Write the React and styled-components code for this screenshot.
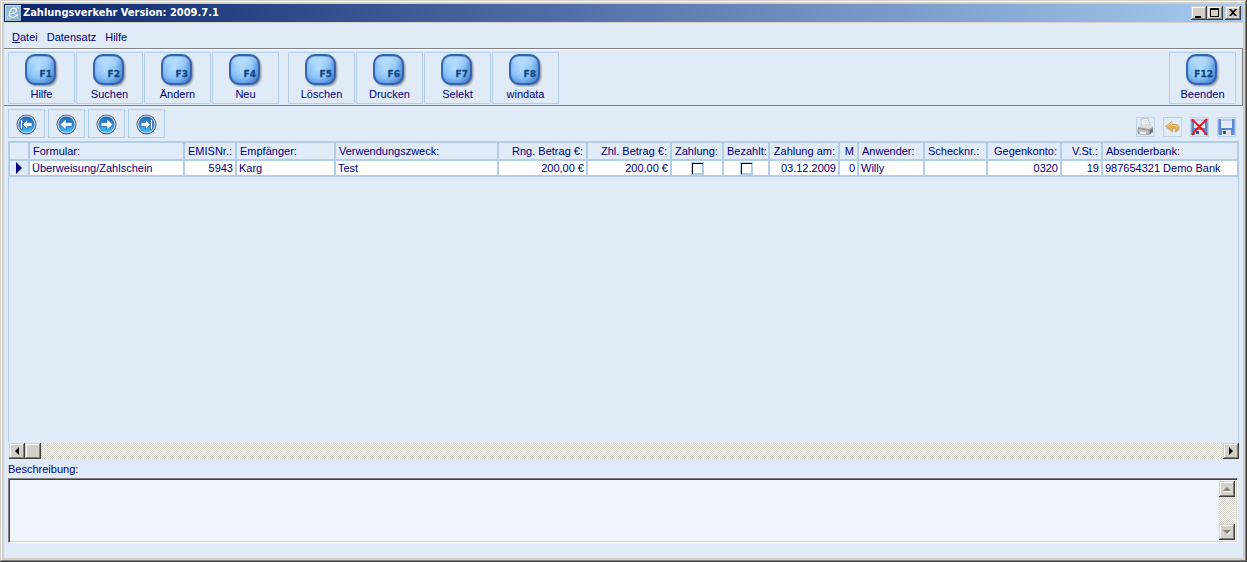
import React from "react";
import styled, { createGlobalStyle, css } from "styled-components";

const theme = {
  face: "#d4d0c8",
  surface: "#e1ebf7",
  field: "#eff4fd",
  line: "#b0cee8",
  text: "#000080",
};

const GlobalStyle = createGlobalStyle`
  * {
    box-sizing: border-box;
  }
  body {
    margin: 0;
    background: ${theme.face};
    color: ${theme.text};
    font-family: "Liberation Sans", Arial, sans-serif;
    font-size: 11px;
    line-height: 14px;
  }
  button, input, textarea {
    margin: 0;
    padding: 0;
    border: 0;
    border-radius: 0;
    background: none;
    color: inherit;
    font: inherit;
  }
  svg {
    display: block;
  }
`;

const raised = css`
  background: ${theme.face};
  box-shadow: inset -1px -1px 0 #404040, inset 1px 1px 0 #d4d0c8,
    inset -2px -2px 0 #808080, inset 2px 2px 0 #ffffff;
`;

const dither = css`
  background: conic-gradient(
      #ffffff 25%,
      ${theme.face} 0 50%,
      #ffffff 0 75%,
      ${theme.face} 0
    )
    0 0 / 2px 2px;
`;

const Window = styled.div`
  display: flex;
  flex-direction: column;
  min-height: 100vh;
  padding: 4px;
  background: ${theme.face};
  box-shadow: inset -1px -1px 0 #404040, inset 1px 1px 0 #d4d0c8,
    inset -2px -2px 0 #808080, inset 2px 2px 0 #ffffff;
`;

const TitleBar = styled.header`
  display: flex;
  align-items: center;
  height: 18px;
  padding: 0 2px 0 1px;
  margin-bottom: 1px;
  background: linear-gradient(to right, #0a246a, #a6caf0);
`;

const Title = styled.h1`
  flex: 1;
  margin: 0 0 0 2px;
  color: #ffffff;
  font-family: "DejaVu Sans Condensed", "DejaVu Sans", sans-serif;
  font-size: 11px;
  font-weight: bold;
`;

const WindowButton = styled.button`
  width: 16px;
  height: 14px;
  margin-left: ${(props) => (props.$gap ? "2px" : "0")};
  ${raised}
`;

const Client = styled.main`
  display: flex;
  flex: 1;
  flex-direction: column;
  background: ${theme.surface};
`;

const MenuBar = styled.nav`
  display: flex;
  align-items: center;
  gap: 9px;
  height: 25px;
  padding: 2px 8px 0;
`;

const ToolBar = styled.div`
  display: flex;
  height: 58px;
  padding: 3px 6px 0 4px;
  border: 1px solid #808080;
  border-left: 0;
  box-shadow: inset 0 1px 0 #ffffff;
`;

const ToolGroup = styled.div`
  display: flex;
  gap: 1px;
  margin-right: 9px;

  &:last-child {
    margin: 0 0 0 auto;
  }
`;

const ToolButton = styled.button`
  display: flex;
  flex-direction: column;
  align-items: center;
  width: 67px;
  height: 52px;
  padding-top: 1px;
  border: 1px solid ${theme.line};
  border-radius: 1px;
`;

const NavRow = styled.div`
  display: flex;
  align-items: flex-end;
  padding: 3px 7px 3px 4px;
`;

const NavGroup = styled.div`
  display: flex;
  flex: 1;
  gap: 3px;
`;

const NavButton = styled.button`
  display: grid;
  place-items: center;
  width: 37px;
  height: 29px;
  padding-top: 2px;
  border: 1px solid ${theme.line};
`;

const ActionGroup = styled.div`
  display: flex;
  gap: 8px;
  padding-bottom: 1px;
`;

const ActionButton = styled.button`
  display: grid;
  place-items: center;
  width: 19px;
  height: 20px;
  border: 1px solid #b9d3ea;
`;

const GridPanel = styled.section`
  display: flex;
  flex: 1;
  flex-direction: column;
  margin: 0 4px;
`;

const GridBody = styled.div`
  flex: 1;
  min-height: 100px;
  border: solid ${theme.line};
  border-width: 0 1px;
`;

const Table = styled.table`
  width: 100%;
  table-layout: fixed;
  border-collapse: separate;
  border-spacing: 2px;
  background: ${theme.line};
`;

const HeadCell = styled.th`
  height: 16px;
  padding: 0 3px;
  overflow: hidden;
  background: ${theme.surface};
  font-weight: normal;
  text-align: ${(props) => props.$align || "left"};
  white-space: nowrap;
`;

const Cell = styled.td`
  height: 14px;
  padding: 0 2px;
  overflow: hidden;
  background: ${(props) => (props.$marker ? theme.surface : "#ffffff")};
  text-align: ${(props) => props.$align || "left"};
  white-space: nowrap;
`;

const CheckBox = styled.input`
  display: block;
  width: 13px;
  height: 13px;
  margin: 0 auto;
  appearance: none;
  border: 1px solid ${theme.line};
  background: #ffffff;
  box-shadow: inset 1px 1px 0 #000000, inset -1px -1px 0 ${theme.line};
`;

const ScrollTrack = styled.div`
  display: flex;
  flex-direction: ${(props) => (props.$vertical ? "column" : "row")};
  margin-left: ${(props) => (props.$vertical ? "0" : "1px")};
  ${dither}
`;

const ScrollButton = styled.button`
  display: grid;
  place-items: center;
  width: 16px;
  height: 16px;
  ${raised}

  &:last-child {
    margin-top: ${(props) => (props.$vertical ? "auto" : "0")};
    margin-left: ${(props) => (props.$vertical ? "0" : "auto")};
  }
`;

const ScrollThumb = styled.div`
  width: 16px;
  height: 16px;
  ${raised}
`;

const Description = styled.section`
  padding: 3px 5px 15px 4px;
`;

const DescriptionLabel = styled.label`
  display: block;
  margin-bottom: 2px;
`;

const Memo = styled.div`
  display: flex;
  height: 65px;
  padding: 2px;
  border: 1px solid;
  border-color: #808080 #ffffff #ffffff #808080;
  background: ${theme.field};
  box-shadow: inset 1px 1px 0 #404040, inset -1px -1px 0 ${theme.face};
`;

const MemoText = styled.textarea`
  flex: 1;
  resize: none;
  outline: none;
`;

const AppIcon = () => (
  <svg width="16" height="16" viewBox="0 0 16 16">
    <rect width="16" height="16" rx="1" fill="#8fbad6" />
    <path d="M0 0h16v1H1v15H0z" fill="#c9dfec" />
    <path
      d="M4.500 8.500C8 9 12 7.500 11.500 5S8 2.500 6 4.500 3.500 11 6 12 11 11.500 13 9.500"
      fill="none"
      stroke="#fff"
      strokeWidth="1.200"
    />
    <path
      d="M3.500 10C1 14 2.500 15 6 13.500M11 2.500c2-1 3-.5 2.500 1.500"
      fill="none"
      stroke="#d9eaf4"
      strokeWidth="0.800"
    />
  </svg>
);

const KeyIcon = ({ label }) => (
  <svg width="36" height="33" viewBox="0 0 36 33">
    <defs>
      <radialGradient id={`key-${label}`} cx="0.42" cy="0.45" r="0.68">
        <stop offset="0" stopColor="#b4e0ff" />
        <stop offset="0.5" stopColor="#8cc4fb" />
        <stop offset="1" stopColor="#3f7acb" />
      </radialGradient>
      <linearGradient id={`shine-${label}`} x2="0" y2="1">
        <stop offset="0" stopColor="#fff" stopOpacity="0.45" />
        <stop offset="1" stopColor="#fff" stopOpacity="0" />
      </linearGradient>
      <filter id={`blur-${label}`}>
        <feGaussianBlur stdDeviation="0.8" />
      </filter>
    </defs>
    <rect
      x="3"
      y="3"
      width="30"
      height="29"
      rx="9"
      fill="#7b8796"
      filter={`url(#blur-${label})`}
    />
    <rect
      x="2"
      y="1"
      width="29"
      height="29"
      rx="9"
      fill={`url(#key-${label})`}
      stroke="#3464ae"
      strokeWidth="2"
    />
    <rect
      x="4"
      y="3"
      width="25"
      height="10"
      rx="7"
      fill={`url(#shine-${label})`}
    />
    <text
      x="28"
      y="23"
      textAnchor="end"
      fill="#12477f"
      stroke="#12477f"
      strokeWidth="0.300"
      fontFamily="DejaVu Sans"
      fontSize="9"
      fontWeight="bold"
    >
      {label}
    </text>
  </svg>
);

const arrowPaths = {
  first: "M4.500 5.500h2v10h-2zM6.500 10.500l5-5v3H16v4h-4.500v3z",
  prev: "M4 10.500l6-5.500v3.500h6v4h-6V16z",
  next: "M17 10.500L11 5v3.500H5v4h6V16z",
  last: "M14.500 5.500h2v10h-2zM14.500 10.500l-5-5v3H5v4h4.500v3z",
};

const NavIcon = ({ kind }) => (
  <svg width="21" height="21" viewBox="0 0 21 21">
    <defs>
      <linearGradient id={`nav-${kind}`} x2="0" y2="1">
        <stop offset="0" stopColor="#2468b8" />
        <stop offset="0.5" stopColor="#2b8ae0" />
        <stop offset="1" stopColor="#43c4ff" />
      </linearGradient>
    </defs>
    <circle cx="10.500" cy="10.500" r="10" fill="#56636f" />
    <circle cx="10.500" cy="10.300" r="9" fill="#c9d8e4" />
    <circle cx="10.500" cy="10.500" r="8" fill={`url(#nav-${kind})`} />
    <path
      d={arrowPaths[kind]}
      fill="#fff"
      stroke="#15599f"
      strokeWidth="0.600"
    />
  </svg>
);

const PrinterIcon = () => (
  <svg width="17" height="18" viewBox="0 0 17 18">
    <path d="M4 1l7-.5 2 7-8 1z" fill="#fff" stroke="#a6adb5" strokeWidth=".7" />
    <path d="M5.500 3l5-.4M6 5l5-.4" stroke="#b9c4d0" strokeWidth=".7" />
    <path d="M1 9l4-2 8-1 3 3v5l-4 3-11-1z" fill="#a5a5a5" />
    <path d="M1 9l4-2 8-1 3 3-4 2z" fill="#dedede" />
    <path d="M1 10.500L12 12v4.500L1 15z" fill="#c9c9c9" stroke="#777" strokeWidth=".6" />
    <path d="M3 13l7 1-1 3-7-1z" fill="#fafafa" stroke="#888" strokeWidth=".5" />
    <path d="M13 12l3-2v4l-3 2z" fill="#777" />
  </svg>
);

const UndoIcon = () => (
  <svg width="17" height="18" viewBox="0 0 17 18">
    <path
      d="M1.500 8.500L8 3.500v3C11.500 6 14.500 6.500 15 9c.5 2.500-1.500 4.500-4 5 1.500-2 1.500-3.500-2.500-3.500V14z"
      fill="#e3ad52"
      stroke="#b98e45"
      strokeWidth=".6"
    />
    <path
      d="M3 8.300l4.500-3.500v2.500c3.500 0 5.500.2 6.500 1.700"
      fill="none"
      stroke="#f8dc9c"
    />
  </svg>
);

const DiskIcon = ({ cancelled }) => (
  <svg width="17" height="18" viewBox="0 0 17 18">
    <path d="M0 1h17v16H1l-1-1z" fill="#5c88d8" />
    <path d="M0 1h1v15H0zM16 1h1v16h-1z" fill="#86a9e6" />
    <path d="M3 1h11v9H3z" fill="#e4ecf8" />
    <path d="M3 1h11v2H3z" fill="#b5cdf2" />
    <path d="M4 12h9v5H4z" fill="#e0e3e8" />
    <path d="M5 13h3v3H5z" fill="#3157a4" />
    {cancelled && (
      <path
        d="M1 1.500C6 6 12 12 16 17M16 1C11 6 5 11 1 17"
        stroke="#e01b1b"
        strokeWidth="2"
        fill="none"
      />
    )}
  </svg>
);

const windowGlyphs = {
  minimize: "M4 10h6v2H4z",
  maximize: "M3 2h9v9H3zM4 4v6h7V4z",
  close: "M4 3h2l2 2 2-2h2L9 6.500 12 10h-2L8 8l-2 2H4l3-3.500z",
};

const WindowGlyph = ({ kind }) => (
  <svg width="16" height="14" viewBox="0 0 16 14">
    <path d={windowGlyphs[kind]} fillRule="evenodd" fill="#000" />
  </svg>
);

const scrollGlyphs = {
  left: "M10 4v8L6 8z",
  right: "M6 4v8l4-4z",
  up: "M4 10h8L8 6z",
  down: "M4 6h8l-4 4z",
};

const ScrollGlyph = ({ kind, disabled }) => (
  <svg width="16" height="16" viewBox="0 0 16 16">
    {disabled && (
      <path d={scrollGlyphs[kind]} fill="#fff" transform="translate(1 1)" />
    )}
    <path d={scrollGlyphs[kind]} fill={disabled ? "#808080" : "#000"} />
  </svg>
);

const toolGroups = [
  [
    ["F1", "Hilfe"],
    ["F2", "Suchen"],
    ["F3", "Ändern"],
    ["F4", "Neu"],
  ],
  [
    ["F5", "Löschen"],
    ["F6", "Drucken"],
    ["F7", "Selekt"],
    ["F8", "windata"],
  ],
  [["F12", "Beenden"]],
];

const columns = [
  { title: "Formular:", width: 153, value: "Überweisung/Zahlschein" },
  { title: "EMISNr.:", width: 50, value: "5943", align: "right" },
  { title: "Empfänger:", width: 97, value: "Karg" },
  { title: "Verwendungszweck:", width: 161, value: "Test" },
  { title: "Rng. Betrag €:", width: 87, value: "200,00 €", align: "right" },
  { title: "Zhl. Betrag €:", width: 82, value: "200,00 €", align: "right" },
  { title: "Zahlung:", width: 50, check: true },
  { title: "Bezahlt:", width: 44, check: true },
  { title: "Zahlung am:", width: 68, value: "03.12.2009", align: "right" },
  { title: "M", width: 17, value: "0", align: "right" },
  { title: "Anwender:", width: 64, value: "Willy" },
  { title: "Schecknr.:", width: 61, value: "" },
  { title: "Gegenkonto:", width: 72, value: "0320", align: "right" },
  { title: "V.St.:", width: 39, value: "19", align: "right" },
  { title: "Absenderbank:", value: "987654321 Demo Bank" },
];

function DataTable() {
  return (
    <Table>
      <colgroup>
        <col width="18" />
        {columns.map((column) => (
          <col key={column.title} width={column.width} />
        ))}
      </colgroup>
      <thead>
        <tr>
          <HeadCell />
          {columns.map((column) => (
            <HeadCell key={column.title} $align={column.align}>
              {column.title}
            </HeadCell>
          ))}
        </tr>
      </thead>
      <tbody>
        <tr>
          <Cell $marker>
            <svg width="14" height="12" viewBox="0 0 14 12">
              <path d="M4 0v12l6-6z" fill={theme.text} />
            </svg>
          </Cell>
          {columns.map((column) => (
            <Cell key={column.title} $align={column.align}>
              {column.check ? (
                <CheckBox type="checkbox" aria-label={column.title} />
              ) : (
                column.value
              )}
            </Cell>
          ))}
        </tr>
      </tbody>
    </Table>
  );
}

function App() {
  return (
    <>
      <GlobalStyle />
      <Window>
        <TitleBar>
          <AppIcon />
          <Title>Zahlungsverkehr Version: 2009.7.1</Title>
          <WindowButton aria-label="Minimieren">
            <WindowGlyph kind="minimize" />
          </WindowButton>
          <WindowButton aria-label="Maximieren">
            <WindowGlyph kind="maximize" />
          </WindowButton>
          <WindowButton $gap aria-label="Schließen">
            <WindowGlyph kind="close" />
          </WindowButton>
        </TitleBar>
        <Client>
          <MenuBar>
            <button>
              <u>D</u>atei
            </button>
            <button>Datensatz</button>
            <button>Hilfe</button>
          </MenuBar>
          <ToolBar>
            {toolGroups.map((group) => (
              <ToolGroup key={group[0][0]}>
                {group.map(([key, label]) => (
                  <ToolButton key={key}>
                    <KeyIcon label={key} />
                    {label}
                  </ToolButton>
                ))}
              </ToolGroup>
            ))}
          </ToolBar>
          <NavRow>
            <NavGroup>
              {Object.keys(arrowPaths).map((kind) => (
                <NavButton key={kind} aria-label={kind}>
                  <NavIcon kind={kind} />
                </NavButton>
              ))}
            </NavGroup>
            <ActionGroup>
              <ActionButton aria-label="Drucken">
                <PrinterIcon />
              </ActionButton>
              <ActionButton aria-label="Rückgängig">
                <UndoIcon />
              </ActionButton>
              <ActionButton aria-label="Verwerfen">
                <DiskIcon cancelled />
              </ActionButton>
              <ActionButton aria-label="Speichern">
                <DiskIcon />
              </ActionButton>
            </ActionGroup>
          </NavRow>
          <GridPanel>
            <DataTable />
            <GridBody />
            <ScrollTrack>
              <ScrollButton aria-label="Nach links">
                <ScrollGlyph kind="left" />
              </ScrollButton>
              <ScrollThumb />
              <ScrollButton aria-label="Nach rechts">
                <ScrollGlyph kind="right" />
              </ScrollButton>
            </ScrollTrack>
          </GridPanel>
          <Description>
            <DescriptionLabel htmlFor="beschreibung">
              Beschreibung:
            </DescriptionLabel>
            <Memo>
              <MemoText id="beschreibung" />
              <ScrollTrack $vertical>
                <ScrollButton $vertical disabled aria-label="Nach oben">
                  <ScrollGlyph kind="up" disabled />
                </ScrollButton>
                <ScrollButton $vertical disabled aria-label="Nach unten">
                  <ScrollGlyph kind="down" disabled />
                </ScrollButton>
              </ScrollTrack>
            </Memo>
          </Description>
        </Client>
      </Window>
    </>
  );
}

export default App;
